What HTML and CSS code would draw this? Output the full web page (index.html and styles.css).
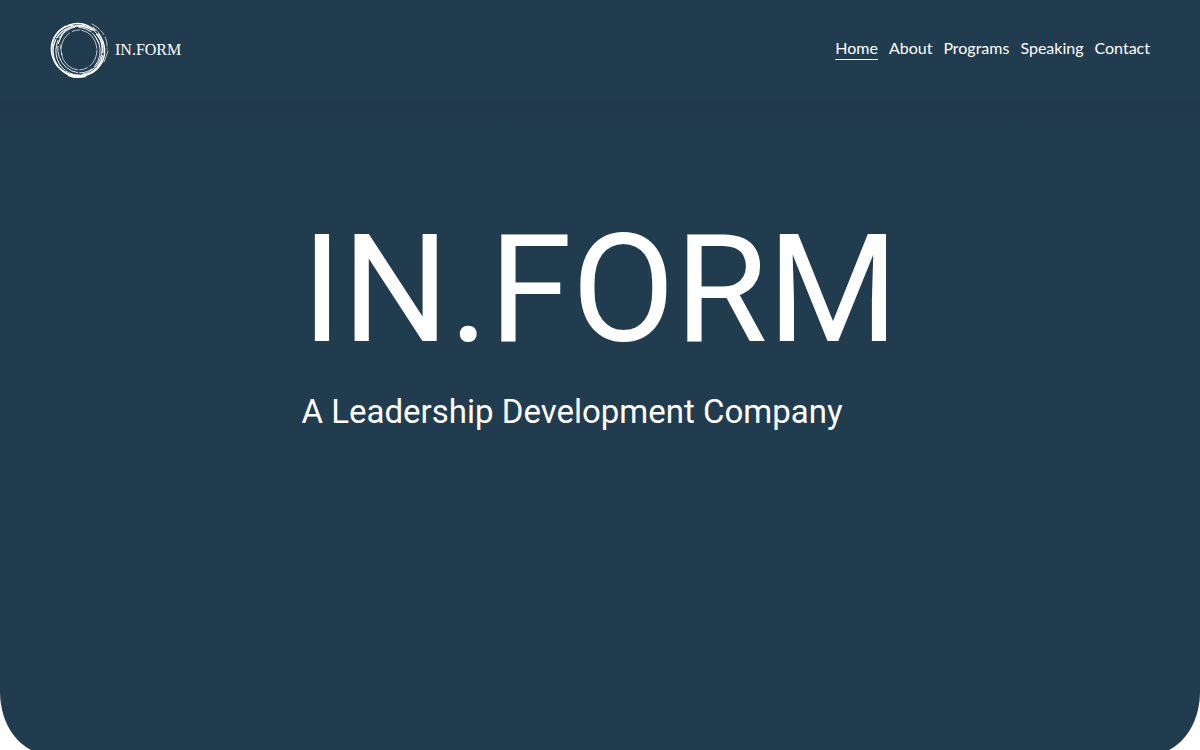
FILE: index.html
```html
<!DOCTYPE html>
<html lang="en">

<head>
  <meta charset="UTF-8">
  <meta name="viewport" content="width=device-width, initial-scale=1.0">
  <title>IN.FORM</title>
  <link rel="stylesheet" href="styles.css">
</head>

<body>

  <div class="page">
    <header class="header">
      <a class="logo" href="#">
        <svg class="logo-ring" viewBox="0 0 60 60" aria-hidden="true">
          <g fill="none" stroke="#fff" stroke-linecap="round">
            <ellipse cx="28" cy="30" rx="27" ry="26" stroke-width="1.3" stroke-dasharray="96 3 28 5" transform="rotate(35 28 30)" />
            <ellipse cx="28" cy="31" rx="25" ry="25" stroke-width="1.3" stroke-dasharray="68 2 40 6 20 3" transform="rotate(50 28 31)" />
            <ellipse cx="29" cy="30" rx="23" ry="25" stroke-width="0.9" stroke-dasharray="30 2 48 3" transform="rotate(12 29 30)" />
            <ellipse cx="29" cy="30" rx="21" ry="23" stroke-width="0.8" stroke-dasharray="24 4 13 2 36 3" transform="rotate(-18 29 30)" />
            <ellipse cx="29" cy="30" rx="18" ry="20" stroke-width="0.7" stroke-dasharray="18 3 8 2 25 5" />
            <path d="M5 42C10 51 19 57 29 56C39 55 48 50 52 41" stroke-width="1.5" />
            <path d="M19 55Q26 58 35 56" stroke-width="2.6" />
            <path d="M2 34C0 18 10 6 23 5" stroke-width="1.4" />
            <path d="M42 4C52 9 58 18 57 29" stroke-width="0.7" stroke-dasharray="9 2 5 3" />
            <path d="M43 7C50 12 53 20 53 27M58 31L54 42M8 24L12 15M12 35L10 25M45 16L49 24" stroke-width="0.7" />
          </g>
        </svg>
        <span class="logo-text">IN.FORM</span>
      </a>
      <nav class="nav">
        <a class="nav-link active" href="#">Home</a>
        <a class="nav-link" href="#">About</a>
        <a class="nav-link" href="#">Programs</a>
        <a class="nav-link" href="#">Speaking</a>
        <a class="nav-link" href="#">Contact</a>
      </nav>
    </header>

    <main class="hero">
      <div class="hero-content">
        <h1>IN.FORM</h1>
        <p class="tagline">A Leadership Development Company</p>
      </div>
    </main>
  </div>

</body>

</html>
```
FILE: styles.css
```css
* {
  box-sizing: border-box;
}

body {
  margin: 0;
  font-family: Lato, sans-serif;
  background: #fff;
  color: #fff;
}

.page {
  display: flex;
  flex-direction: column;
  height: 100vh;
  overflow: hidden;
}

.header {
  display: flex;
  flex-wrap: wrap;
  flex-shrink: 0;
  justify-content: space-between;
  align-items: center;
  padding: 20px 50px;
  background: #223c4f;
}

.logo {
  display: flex;
  align-items: center;
  gap: 5px;
  color: #fff;
  text-decoration: none;
}

.logo-ring {
  width: 60px;
  height: 60px;
}

.logo-text {
  font-family: "Liberation Serif", serif;
  font-size: 16px;
}

.nav {
  display: flex;
  gap: 11px;
  padding-bottom: 3px;
}

.nav-link {
  border-bottom: 1px solid transparent;
  color: #fff;
  font-size: 16px;
  line-height: 22px;
  text-decoration: none;
}

.nav-link.active {
  border-bottom-color: #fff;
}

/* the rounded bottom edge runs slightly past the fold */
.hero {
  flex: 1 0 auto;
  min-height: calc(100vh - 96px);
  padding: 100px 20px;
  background: linear-gradient(#203a4c, #223c4f 30px);
  border-radius: 0 0 48px 48px / 0 0 62px 62px;
}

.hero-content {
  width: fit-content;
  margin: 0 auto;
  font-family: Roboto, sans-serif;
}

h1 {
  margin: 0;
  font-size: 150px;
  font-weight: 400;
  line-height: 180px;
}

.tagline {
  margin: 12px 0 0;
  font-size: 33px;
  line-height: 40px;
}
```
